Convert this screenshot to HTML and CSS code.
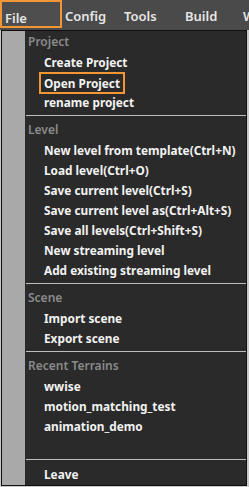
FILE: index.html
```html
<!DOCTYPE html>
<html>
<head>
<meta charset="utf-8">
<link rel="stylesheet" href="styles.css">
</head>
<body>
<div class="menubar">
  <div class="mb-item mb-file"><span>File</span></div>
  <div class="mb-item mb-config">Config</div>
  <div class="mb-item mb-tools">Tools</div>
  <div class="mb-item mb-build">Build</div>
  <div class="mb-item mb-w">W</div>
</div>
<div class="menu">
  <div class="strip"></div>
  <div class="list">
    <div class="header">Project</div>
    <div class="item">Create Project</div>
    <div class="item"><span class="hl">Open Project</span></div>
    <div class="item">rename project</div>
    <div class="sep"></div>
    <div class="header">Level</div>
    <div class="item">New level from template(Ctrl+N)</div>
    <div class="item">Load level(Ctrl+O)</div>
    <div class="item">Save current level(Ctrl+S)</div>
    <div class="item">Save current level as(Ctrl+Alt+S)</div>
    <div class="item">Save all levels(Ctrl+Shift+S)</div>
    <div class="item">New streaming level</div>
    <div class="item">Add existing streaming level</div>
    <div class="sep"></div>
    <div class="header">Scene</div>
    <div class="item">Import scene</div>
    <div class="item">Export scene</div>
    <div class="sep"></div>
    <div class="header">Recent Terrains</div>
    <div class="item">wwise</div>
    <div class="item">motion_matching_test</div>
    <div class="item">animation_demo</div>
    <div class="item"></div>
    <div class="sep"></div>
    <div class="item">Leave</div>
  </div>
</div>
</body>
</html>
```
FILE: styles.css
```css
html, body {
  margin: 0;
  padding: 0;
}
body {
  width: 249px;
  height: 487px;
  overflow: hidden;
  background: #c9c9c9;
  font-family: "Noto Sans", "DejaVu Sans", sans-serif;
}
.menubar {
  display: flex;
  height: 30px;
  background: #4a4a4a;
  color: #e6e6e6;
  font-size: 13px;
  font-weight: 600;
}
.mb-item {
  box-sizing: border-box;
  padding-top: 6px;
  line-height: 20px;
  white-space: nowrap;
}
.mb-file {
  width: 65px;
  padding-top: 0;
}
.mb-file span {
  display: block;
  box-sizing: border-box;
  width: 62px;
  height: 28px;
  padding: 6px 0 0 3px;
  border: 2px solid #f39636;
  background: #4e4e4e;
}
.mb-config { width: 59px; }
.mb-tools { width: 61px; }
.mb-build { width: 58px; }
.mb-w { width: 6px; }
.menu {
  display: flex;
  margin-left: 1px;
  width: 246px;
  height: 456px;
  box-sizing: border-box;
  border: 1px solid #101010;
  background: #2a2a2a;
}
.strip {
  width: 23px;
  background: #a9a9a9;
}
.list {
  flex: 1;
  padding-top: 1px;
}
.header {
  height: 20px;
  line-height: 20px;
  padding-left: 3px;
  color: #8a8a8a;
  font-size: 12px;
  font-weight: 600;
}
.item {
  height: 20px;
  line-height: 20px;
  padding-left: 19px;
  color: #f2f2f2;
  font-size: 11.8px;
  font-weight: 700;
  white-space: nowrap;
}
.hl {
  display: inline-block;
  vertical-align: top;
  box-sizing: border-box;
  height: 22px;
  line-height: 18px;
  padding: 0 3px;
  margin-left: -5px;
  border: 2px solid #f39636;
}
.sep {
  height: 1px;
  margin: 3px 0 4px 1px;
  background: #bdbdbd;
}
```
